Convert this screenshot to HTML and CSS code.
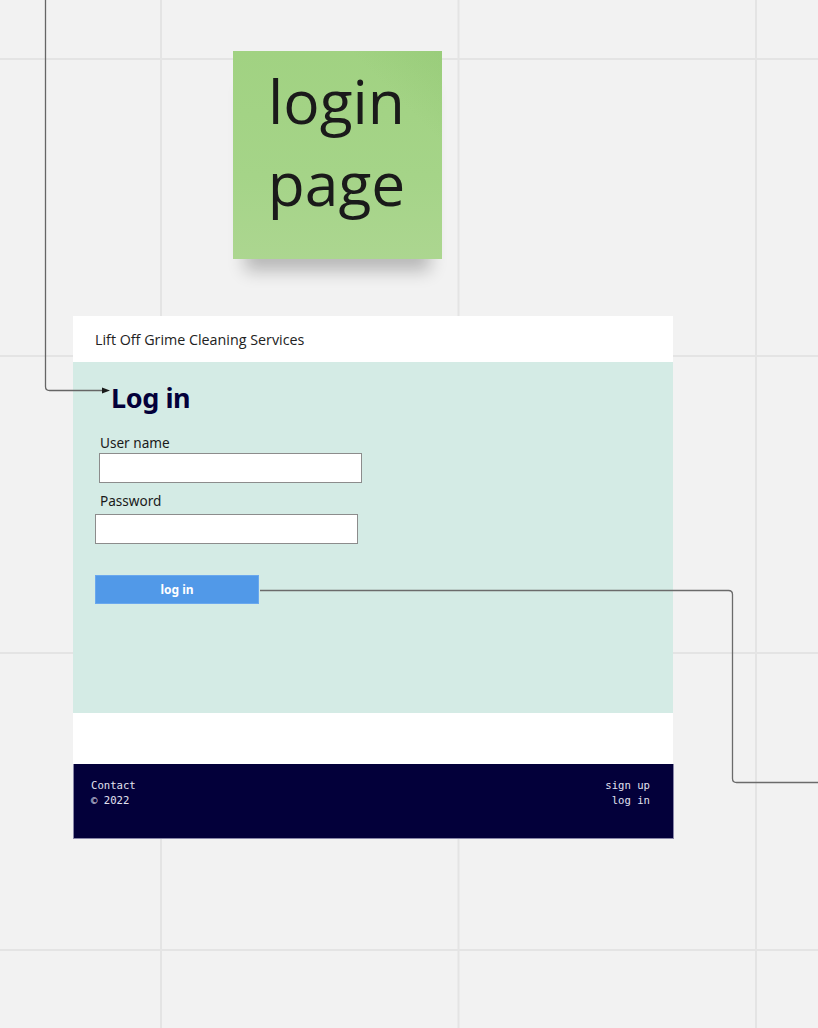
FILE: index.html
```html
<!DOCTYPE html>
<html lang="en">
<head>
<meta charset="utf-8">
<title>login page</title>
<link rel="stylesheet" href="styles.css">
</head>
<body>
<div class="canvas">
  <div class="sticky">
    <p class="sticky-text">login<br>page</p>
  </div>

  <div class="frame">
    <header class="site-header">Lift Off Grime Cleaning Services</header>
    <main class="login">
      <h1 class="login-title">Log in</h1>
      <form class="login-form">
        <div class="field field-user">
          <label class="field-label" for="user">User name</label>
          <input class="field-input" id="user" type="text">
        </div>
        <div class="field field-pass">
          <label class="field-label" for="pass">Password</label>
          <input class="field-input" id="pass" type="password">
        </div>
        <button class="login-button" type="button">log in</button>
      </form>
    </main>
    <div class="spacer"></div>
    <footer class="site-footer">
      <div class="footer-col">
        <span>Contact</span>
        <span>© 2022</span>
      </div>
      <div class="footer-col footer-right">
        <span>sign up</span>
        <span>log in</span>
      </div>
    </footer>
  </div>

  <svg class="connectors" width="818" height="1028" viewBox="0 0 818 1028">
    <path d="M45.5 0 V386.5 Q45.5 390.5 49.5 390.5 H104" fill="none" stroke="#666" stroke-width="1.3"/>
    <polygon points="102,387.5 110,390.5 102,393.5" fill="#1a1a1a"/>
    <path d="M260 590.5 H728.5 Q732.5 590.5 732.5 594.5 V778.5 Q732.5 782.5 736.5 782.5 H818" fill="none" stroke="#6b6b6b" stroke-width="1.3"/>
  </svg>
</div>
</body>
</html>
```

FILE: styles.css
```css
* { box-sizing: border-box; }

html, body {
  margin: 0;
  padding: 0;
}

body {
  width: 818px;
  height: 1028px;
  overflow: hidden;
  background-color: #f2f2f2;
}

.canvas {
  position: relative;
  width: 818px;
  height: 1028px;
  background-color: #f2f2f2;
  background-image:
    linear-gradient(to right, #e4e4e4 2px, transparent 2px),
    linear-gradient(to bottom, #e4e4e4 2px, transparent 2px);
  background-size: 297.5px 100%, 100% 297px;
  background-position: 160px 0, 0 58px;
}

/* sticky note */
.sticky {
  position: absolute;
  left: 233px;
  top: 51px;
  width: 209px;
  height: 208px;
  background:
    linear-gradient(225deg, rgba(140, 195, 110, 0.35) 0%, rgba(140, 195, 110, 0) 22%),
    linear-gradient(to bottom, #a1d282 0%, #a5d488 60%, #acd690 100%);
  box-shadow: 0 24px 16px -12px rgba(0, 0, 0, 0.24);
  padding-top: 9px;
}

.sticky-text {
  margin: 0;
  font-family: "Open Sans", "Noto Sans", sans-serif;
  font-size: 60.5px;
  line-height: 82px;
  color: #1a1a1a;
  text-align: center;
  padding-right: 2px;
}

/* frame */
.frame {
  position: absolute;
  left: 73px;
  top: 316px;
  width: 600px;
  display: flex;
  flex-direction: column;
}

.site-header {
  height: 46px;
  background: #ffffff;
  padding-left: 22px;
  display: flex;
  align-items: center;
  font-family: "Open Sans", "Noto Sans", sans-serif;
  font-size: 14.3px;
  color: #222;
}

.login {
  height: 351px;
  background: #d4ebe5;
  padding: 20px 0 0 38px;
}

.login-title {
  margin: 0;
  font-family: "Noto Sans", "Open Sans", sans-serif;
  font-weight: 700;
  font-size: 27px;
  line-height: 32px;
  color: #03003a;
  letter-spacing: -0.4px;
}

.login-form {
  margin: 20px 0 0 -16px;
  display: flex;
  flex-direction: column;
  align-items: flex-start;
}

.field {
  display: flex;
  flex-direction: column;
  align-items: flex-start;
}

.field-label {
  font-family: "Noto Sans", "Open Sans", sans-serif;
  font-size: 13.6px;
  line-height: 18px;
  color: #1a1a1a;
  margin-left: 5px;
}

.field-input {
  width: 263px;
  height: 30px;
  margin: 1px 0 0 0;
  border: 1px solid #8c8c8c;
  background: #fff;
  padding: 0 6px;
  font: inherit;
  outline: none;
}

.field-user .field-input {
  margin-left: 4px;
}

.field-pass {
  margin-top: 9px;
}

.field-pass .field-input {
  margin-top: 4px;
}

.login-button {
  margin-top: 31px;
  width: 164px;
  height: 29px;
  background: #5199e8;
  border: 1px solid #6aa8ee;
  color: #ffffff;
  font-family: "Noto Sans", "Open Sans", sans-serif;
  font-weight: 700;
  font-size: 12px;
  padding: 0;
}

.spacer {
  height: 51px;
  background: #ffffff;
}

.site-footer {
  height: 75px;
  background: #03003a;
  border: 1px solid #8987a8;
  border-top: none;
  width: 601px;
  display: flex;
  justify-content: space-between;
  padding: 14px 23px 0 17px;
  font-family: "DejaVu Sans Mono", "Liberation Mono", monospace;
  font-size: 10.6px;
  line-height: 15px;
  color: #e2e2f0;
}

.footer-col {
  display: flex;
  flex-direction: column;
}

.footer-right {
  align-items: flex-end;
}

.connectors {
  position: absolute;
  left: 0;
  top: 0;
  pointer-events: none;
}
```
